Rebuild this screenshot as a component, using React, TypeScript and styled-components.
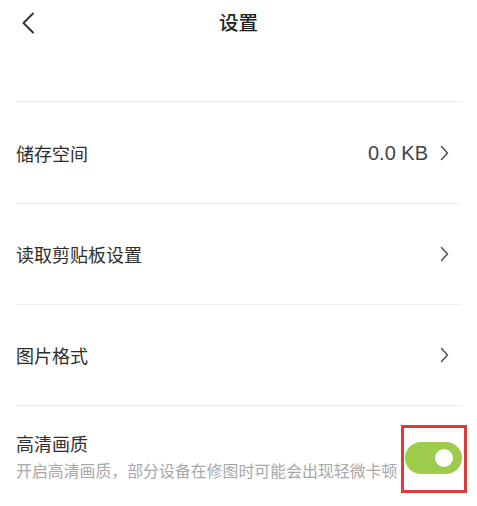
import React from "react";
import styled, { createGlobalStyle } from "styled-components";

const Global = createGlobalStyle`
  html, body { margin: 0; padding: 0; background: #fff; }
  body { font-family: "Noto Sans CJK SC", "Noto Sans", sans-serif; color: #333; }
`;

const Page = styled.div`
  width: 477px;
  height: 506px;
  overflow: hidden;
  background: #fff;
  position: relative;
`;

const Header = styled.div`
  height: 44px;
  display: flex;
  align-items: center;
  justify-content: center;
  position: relative;
`;

const BackButton = styled.div`
  position: absolute;
  left: 20px;
  top: 12px;
  width: 16px;
  height: 22px;
  display: flex;
  align-items: center;
  justify-content: center;
`;

const Title = styled.div`
  font-size: 19.5px;
  font-weight: 500;
  color: #222;
  line-height: 24px;
`;

const List = styled.div`
  margin: 57px 16px 0 16px;
  width: 445px;
`;

const Row = styled.div<{ $h: number }>`
  height: ${(p) => p.$h}px;
  border-top: 1px solid #ececec;
  display: flex;
  align-items: center;
  justify-content: space-between;
  box-sizing: border-box;
`;

const Label = styled.div`
  font-size: 18px;
  color: #2e2e2e;
  line-height: 24px;
`;

const Right = styled.div`
  display: flex;
  align-items: center;
  gap: 12px;
  margin-right: 12px;
`;

const Value = styled.div`
  font-size: 20px;
  color: #444;
  font-family: "Liberation Sans", "Noto Sans CJK SC", sans-serif;
  line-height: 24px;
`;

const TextBlock = styled.div`
  display: flex;
  flex-direction: column;
  gap: 6px;
`;

const Sub = styled.div`
  font-size: 15.9px;
  color: #a8a8a8;
  line-height: 20px;
  white-space: nowrap;
`;

const Toggle = styled.div`
  width: 57px;
  height: 32px;
  border-radius: 16px;
  background: #9dcc4c;
  position: relative;
  margin-top: 4px;
  margin-right: -1px;
  flex-shrink: 0;
`;

const Knob = styled.div`
  position: absolute;
  right: 9px;
  top: 7px;
  width: 18px;
  height: 18px;
  border-radius: 50%;
  background: #fff;
`;

const Highlight = styled.div`
  position: absolute;
  left: 401px;
  top: 425px;
  width: 66px;
  height: 68px;
  border: 3px solid #e0393a;
  box-sizing: border-box;
  pointer-events: none;
`;

const Chevron = () => (
  <svg width="9" height="16" viewBox="0 0 9 16">
    <path d="M1.5 1.5 L7.5 8 L1.5 14.5" fill="none" stroke="#555" strokeWidth="1.6" strokeLinecap="round" strokeLinejoin="round" />
  </svg>
);

export default function App() {
  return (
    <Page>
      <Global />
      <Header>
        <BackButton>
          <svg width="14" height="22" viewBox="0 0 14 22">
            <path d="M12 1.5 L2.5 11 L12 20.5" fill="none" stroke="#333" strokeWidth="2" strokeLinecap="round" strokeLinejoin="round" />
          </svg>
        </BackButton>
        <Title>设置</Title>
      </Header>
      <List>
        <Row $h={102}>
          <Label>储存空间</Label>
          <Right>
            <Value>0.0 KB</Value>
            <Chevron />
          </Right>
        </Row>
        <Row $h={101}>
          <Label>读取剪贴板设置</Label>
          <Right>
            <Chevron />
          </Right>
        </Row>
        <Row $h={101}>
          <Label>图片格式</Label>
          <Right>
            <Chevron />
          </Right>
        </Row>
        <Row $h={100}>
          <TextBlock>
            <Label>高清画质</Label>
            <Sub>开启高清画质，部分设备在修图时可能会出现轻微卡顿</Sub>
          </TextBlock>
          <Toggle>
            <Knob />
          </Toggle>
        </Row>
      </List>
      <Highlight />
    </Page>
  );
}
